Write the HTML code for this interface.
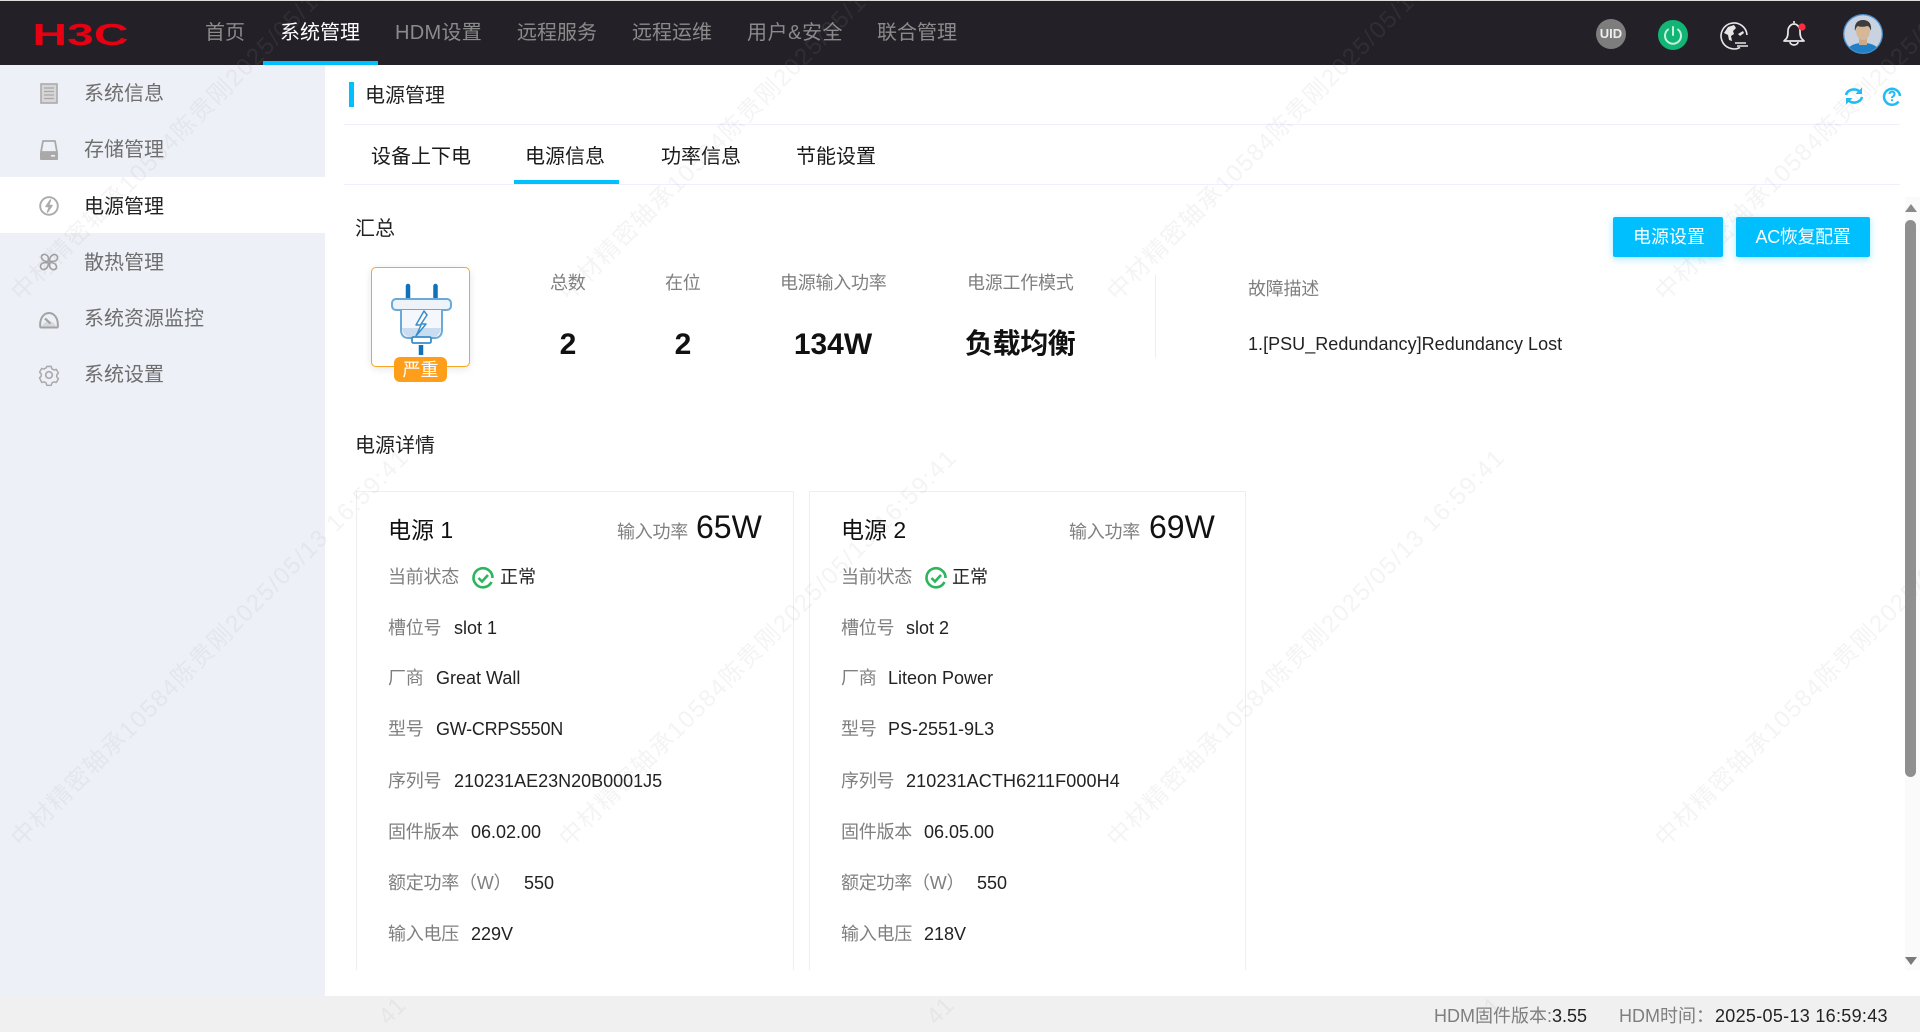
<!DOCTYPE html>
<html lang="zh-CN">
<head>
<meta charset="utf-8">
<title>电源管理</title>
<style>
*{box-sizing:border-box}
html,body{margin:0;padding:0;width:1920px;height:1032px;overflow:hidden;background:#fff;font-family:"Liberation Sans","Noto Sans CJK SC",sans-serif;color:#222}
#page{position:absolute;left:0;top:0;width:1920px;height:1032px;overflow:hidden}
.a{position:absolute;white-space:nowrap}
.t{position:absolute;white-space:nowrap;line-height:30px;height:30px}
.n{font-size:20px;color:#8b8b8b;top:18px}
.s{font-size:20px;color:#6e6e6e;left:84px}
.tab{font-size:20px;color:#1a1a1a;top:142px}
.l{font-size:18px;color:#7f7f7f;letter-spacing:-.25px}
.v{font-size:18px;color:#222}
.b{font-weight:bold;color:#111}
.line{position:absolute;left:344px;width:1556px;height:1px;background:#eeeeff}
.btn{position:absolute;top:217px;height:40px;background:#00bfff;border-radius:2px;color:#fff;font-size:18px;line-height:41px;text-align:center;box-shadow:0 2px 8px rgba(0,191,255,.35)}
.card{position:absolute;top:491px;height:490px;border:1px solid #eee;background:#fff}
.ic{position:absolute;overflow:visible}
</style>
</head>
<body>
<div id="page">
<div class="a" style="left:0;top:0;width:1920px;height:1px;background:#ddd"></div>
<div class="a" style="left:0;top:1px;width:1920px;height:64px;background:#232127"></div>

<svg class="ic" style="left:34px;top:19px" width="94" height="28" viewBox="0 0 94 28"><text x="-1.500" y="26" font-family="Liberation Sans" font-weight="bold" font-size="31" fill="#e60012" textLength="96" lengthAdjust="spacingAndGlyphs">H3C</text></svg>

<div class="t n" style="left:205px">首页</div>
<div class="t n" style="left:280px;color:#fff">系统管理</div>
<div class="a" style="left:263px;top:61px;width:115px;height:4px;background:#00bfff"></div>
<div class="t n" style="left:395px;letter-spacing:.3px">HDM设置</div>
<div class="t n" style="left:517px">远程服务</div>
<div class="t n" style="left:632px">远程运维</div>
<div class="t n" style="left:747px;letter-spacing:.55px">用户&amp;安全</div>
<div class="t n" style="left:877px">联合管理</div>

<div class="a" style="left:1596px;top:19px;width:30px;height:30px;border-radius:50%;background:#7d7d7d;color:#eee;font-size:13px;font-weight:bold;line-height:30px;text-align:center">UID</div>
<svg class="ic" style="left:1658px;top:20px" width="30" height="30" viewBox="0 0 30 30"><circle cx="15" cy="15" r="15" fill="#12b573"/><path d="M10 9.500a8 8 0 1 0 10 0" fill="none" stroke="#c9f0df" stroke-width="2" stroke-linecap="round"/><path d="M15 7v8" stroke="#c9f0df" stroke-width="2" stroke-linecap="round"/></svg>
<svg class="ic" style="left:1719px;top:21px" width="30" height="30" viewBox="0 0 30 30"><path d="M21 26.500A13 13 0 1 1 28 14" fill="none" stroke="#e6e6e6" stroke-width="1.600"/><path d="M9 6l6-2 2 3-3 3 1 3-3 2 1 5-3-1-1-5-4-2z" fill="#e6e6e6"/><path d="M19 13l5-3 1 2-4 3z" fill="#e6e6e6"/><path d="M16 22h11M18 25h11" stroke="#e6e6e6" stroke-width="1.500"/></svg>
<svg class="ic" style="left:1781px;top:19px" width="28" height="28" viewBox="0 0 28 28"><path d="M13 2v2M5 20c2-2 2-5 2-8 0-4 3-7 6-7s6 3 6 7c0 3 0 6 2 8l2 2H3z" fill="none" stroke="#e8e8e8" stroke-width="1.700" stroke-linejoin="round"/><path d="M9 23a4 3 0 0 0 8 0" fill="none" stroke="#e8e8e8" stroke-width="1.700"/><circle cx="21" cy="8" r="3.600" fill="#ff2d3d"/></svg>
<svg class="ic" style="left:1843px;top:14px" width="40" height="40" viewBox="0 0 40 40"><defs><clipPath id="av"><circle cx="20" cy="20" r="19"/></clipPath></defs><circle cx="20" cy="20" r="20" fill="#4a90cf"/><circle cx="20" cy="20" r="18.700" fill="#c8d2e0"/><g clip-path="url(#av)"><path d="M3 40c1-8 8-11 17-11s16 3 17 11z" fill="#1f80c8"/><rect x="16" y="22" width="8" height="9" fill="#c9ab8c"/><ellipse cx="20" cy="17" rx="7" ry="9" fill="#d6b899"/><path d="M12 17c-1-8 3-11 8-11s9 3 8 11c-1-3-2-5-4-5-3 1-7 1-9 0-2 1-2 3-3 5z" fill="#3d3d3d"/></g></svg>

<div class="a" style="left:0;top:65px;width:325px;height:931px;background:#eef0f7"></div>
<div class="a" style="left:0;top:177px;width:325px;height:56px;background:#fff"></div>

<svg class="ic" style="left:40px;top:83px" width="18" height="21" viewBox="0 0 18 21"><rect x="1" y="1" width="16" height="19" fill="#d6d6d8" stroke="#ababab" stroke-width="1.600"/><path d="M4 5h10M4 8.500h10M4 12h10M4 15.500h10" stroke="#a8a8a8" stroke-width="1.300"/></svg>
<svg class="ic" style="left:39px;top:139px" width="20" height="22" viewBox="0 0 20 22"><path d="M4 2h12l2 11H2z" fill="none" stroke="#a9a9a9" stroke-width="1.800" stroke-linejoin="round"/><rect x="1" y="13" width="18" height="8" rx="1" fill="#a9a9a9"/><rect x="12" y="16" width="4" height="1.600" fill="#eef0f7"/></svg>
<svg class="ic" style="left:39px;top:196px" width="20" height="20" viewBox="0 0 20 20"><circle cx="10" cy="10" r="8.800" fill="none" stroke="#ababab" stroke-width="1.900"/><path d="M11.500 4L7 10.500h3.600L8.500 16l4.500-6.500H9.400z" fill="none" stroke="#ababab" stroke-width="1.500" stroke-linejoin="round"/></svg>
<svg class="ic" style="left:39px;top:252px" width="20" height="20" viewBox="0 0 20 20"><g fill="none" stroke="#a0a0a0" stroke-width="1.600"><path d="M9 9.500C5.500 9.500 3 8 2.500 5.500S5 1.500 7.500 3 9.500 7 9 9.500z"/><path d="M10.500 9c0-3.500 2-6 4.500-6.500s4.500 2.500 3 5-5 2-7.500 1.500z"/><path d="M11 10.500c3.500 0 6 1.500 6.500 4s-2.500 4-5 2.500-2-4-1.500-6.500z"/><path d="M9.500 11c0 3.500-2 6-4.500 6.500s-4.500-2.500-3-5 5-2 7.500-1.500z"/></g></svg>
<svg class="ic" style="left:39px;top:311px" width="20" height="18" viewBox="0 0 20 18"><path d="M1.200 15.500C.5 7 5 2 10 2s9.500 5 8.800 13.500q-.1 1-1 1H2.200q-.9 0-1-1z" fill="none" stroke="#a3a3a3" stroke-width="2"/><path d="M6 7.500l5.500 5" stroke="#a3a3a3" stroke-width="2.200"/><path d="M3 16.500a7 6 0 0 1 14 0" fill="#a3a3a3" opacity=".3"/></svg>
<svg class="ic" style="left:38px;top:364px" width="22" height="22" viewBox="0 0 22 22"><path d="M8.500 1.500h5l.7 2.600 2.300 1.300 2.600-.7 2.400 4.200-1.900 1.900v2.400l1.900 1.900-2.400 4.200-2.600-.7-2.300 1.300-.7 2.600h-5l-.7-2.600-2.300-1.300-2.600.7L.5 14.100l1.900-1.900V9.800L.5 7.900l2.400-4.200 2.600.7 2.300-1.300z" transform="translate(1.100 1.100) scale(.9)" fill="none" stroke="#ababab" stroke-width="1.700" stroke-linejoin="round"/><circle cx="11" cy="11" r="3.300" fill="none" stroke="#ababab" stroke-width="1.700"/></svg>

<div class="t s" style="top:79px">系统信息</div>
<div class="t s" style="top:135px">存储管理</div>
<div class="t s" style="top:192px;color:#222">电源管理</div>
<div class="t s" style="top:248px">散热管理</div>
<div class="t s" style="top:304px">系统资源监控</div>
<div class="t s" style="top:360px">系统设置</div>

<div class="a" style="left:349px;top:82px;width:5px;height:25px;background:#00bfff"></div>
<div class="t" style="left:365px;top:81px;font-size:20px;color:#222">电源管理</div>
<svg class="ic" style="left:1844px;top:86px" width="20" height="20" viewBox="0 0 20 20"><g fill="none" stroke="#1fbcf5" stroke-width="2.600"><path d="M2 9a8 7 0 0 1 14-3"/><path d="M18 11a8 7 0 0 1-14 3"/></g><path d="M18 1.500v6.500h-6.500z" fill="#1fbcf5"/><path d="M2 18.500V12h6.500z" fill="#1fbcf5"/></svg>
<svg class="ic" style="left:1883px;top:87px" width="18" height="18" viewBox="0 0 18 18"><path d="M15.500 14.500A8 8 0 1 1 17 9" fill="none" stroke="#1fbcf5" stroke-width="2.500"/><path d="M6.500 7a2.500 2.500 0 1 1 3.800 2.200c-.9.500-1.300 1-1.300 1.800" fill="none" stroke="#1fbcf5" stroke-width="2"/><circle cx="9" cy="13.200" r="1.100" fill="#1fbcf5"/></svg>
<div class="line" style="top:124px"></div>
<div class="t tab" style="left:371px">设备上下电</div>
<div class="t tab" style="left:525px">电源信息</div>
<div class="t tab" style="left:661px">功率信息</div>
<div class="t tab" style="left:796px">节能设置</div>
<div class="line" style="top:184px"></div>
<div class="a" style="left:514px;top:180px;width:105px;height:4px;background:#00bfff"></div>

<div class="t" style="left:355px;top:214px;font-size:20px;color:#222">汇总</div>

<div class="a" style="left:371px;top:267px;width:99px;height:100px;border:1px solid #f5a623;border-radius:5px;box-shadow:0 2px 8px rgba(0,0,0,.1);background:#fff"></div>
<svg class="ic" style="left:371px;top:267px" width="99" height="100" viewBox="371 267 99 100"><g fill="none" stroke-linecap="round"><path d="M408 286v14M435.500 286v14" stroke="#0f72ba" stroke-width="4.500"/><path d="M421 345v10" stroke="#0f72ba" stroke-width="4.500" stroke-linecap="butt"/></g><rect x="392" y="299" width="59" height="11" rx="4" fill="#eef3fa" stroke="#6aa9d8" stroke-width="2"/><path d="M401 310v20c0 5 3 8 7 8h27c4 0 7-3 7-8v-20" fill="#f4f7fc" stroke="#6aa9d8" stroke-width="2"/><path d="M402 328c1 6 4 9 8 9h23c4 0 7-3 8-9z" fill="#c9dcf0"/><rect x="412" y="337" width="19" height="6" rx="1.500" fill="#fff" stroke="#3a8dc9" stroke-width="1.800"/><path d="M424 311l-8 14h5l-3 7-2 4 10-12h-5l6-9z" fill="#fff" stroke="#3a8dc9" stroke-width="1.500" stroke-linejoin="round"/></svg>
<div class="a" style="left:394px;top:357px;width:53px;height:25px;background:#ff9e1b;border-radius:6px;color:#fff;font-size:18px;line-height:26px;text-align:center">严重</div>

<div class="t l" style="left:550px;top:268px">总数</div>
<div class="t l" style="left:665px;top:268px">在位</div>
<div class="t l" style="left:780px;top:268px">电源输入功率</div>
<div class="t l" style="left:967px;top:268px">电源工作模式</div>
<div class="t b" style="left:548px;width:40px;text-align:center;top:329px;font-size:30px;line-height:32px">2</div>
<div class="t b" style="left:663px;width:40px;text-align:center;top:329px;font-size:30px;line-height:32px">2</div>
<div class="t b" style="left:773px;width:120px;text-align:center;top:329px;font-size:30px;line-height:32px">134W</div>
<div class="t b" style="left:965px;top:327px;font-size:28px;line-height:34px;height:34px;letter-spacing:-.4px">负载均衡</div>
<div class="a" style="left:1155px;top:275px;width:1px;height:83px;background:#eee"></div>
<div class="t l" style="left:1248px;top:274px">故障描述</div>
<div class="t v" style="left:1248px;top:329px;letter-spacing:.03px">1.[PSU_Redundancy]Redundancy Lost</div>

<div class="btn" style="left:1613px;width:110px;padding-left:2px">电源设置</div>
<div class="btn" style="left:1736px;width:134px;letter-spacing:-.35px">AC恢复配置</div>

<div class="t" style="left:355px;top:431px;font-size:20px;color:#222">电源详情</div>

<div class="card" style="left:356px;width:438px"></div>
<div class="card" style="left:809px;width:437px"></div>

<!-- Card 1 -->
<div class="t" style="left:388px;top:515px;font-size:23px;color:#111">电源 1</div>
<div class="t l" style="left:617px;top:517px">输入功率</div>
<div class="t" style="left:696px;top:510px;font-size:32px;line-height:34px;height:34px;color:#111">65W</div>
<div class="t l" style="left:388px;top:562px">当前状态</div>
<svg class="ic" style="left:472px;top:567px" width="22" height="22" viewBox="0 0 22 22"><path d="M19.500 15A9.500 9.500 0 1 1 20.500 11" fill="none" stroke="#2db55d" stroke-width="2.600"/><path d="M6.500 11l3.500 3.500 6-6.500" fill="none" stroke="#2db55d" stroke-width="2.600"/></svg>
<div class="t v" style="left:500px;top:562px">正常</div>
<div class="t l" style="left:388px;top:613px">槽位号</div><div class="t v" style="left:454px;top:613px">slot 1</div>
<div class="t l" style="left:388px;top:663px">厂商</div><div class="t v" style="left:436px;top:663px">Great Wall</div>
<div class="t l" style="left:388px;top:714px">型号</div><div class="t v" style="left:436px;top:714px;letter-spacing:-.25px">GW-CRPS550N</div>
<div class="t l" style="left:388px;top:766px">序列号</div><div class="t v" style="left:454px;top:766px">210231AE23N20B0001J5</div>
<div class="t l" style="left:388px;top:817px">固件版本</div><div class="t v" style="left:471px;top:817px">06.02.00</div>
<div class="t l" style="left:388px;top:868px">额定功率（W）</div><div class="t v" style="left:524px;top:868px">550</div>
<div class="t l" style="left:388px;top:919px">输入电压</div><div class="t v" style="left:471px;top:919px">229V</div>

<!-- Card 2 -->
<div class="t" style="left:841px;top:515px;font-size:23px;color:#111">电源 2</div>
<div class="t l" style="left:1069px;top:517px">输入功率</div>
<div class="t" style="left:1149px;top:510px;font-size:32px;line-height:34px;height:34px;color:#111">69W</div>
<div class="t l" style="left:841px;top:562px">当前状态</div>
<svg class="ic" style="left:925px;top:567px" width="22" height="22" viewBox="0 0 22 22"><path d="M19.500 15A9.500 9.500 0 1 1 20.500 11" fill="none" stroke="#2db55d" stroke-width="2.600"/><path d="M6.500 11l3.500 3.500 6-6.500" fill="none" stroke="#2db55d" stroke-width="2.600"/></svg>
<div class="t v" style="left:952px;top:562px">正常</div>
<div class="t l" style="left:841px;top:613px">槽位号</div><div class="t v" style="left:906px;top:613px">slot 2</div>
<div class="t l" style="left:841px;top:663px">厂商</div><div class="t v" style="left:888px;top:663px">Liteon Power</div>
<div class="t l" style="left:841px;top:714px">型号</div><div class="t v" style="left:888px;top:714px">PS-2551-9L3</div>
<div class="t l" style="left:841px;top:766px">序列号</div><div class="t v" style="left:906px;top:766px;letter-spacing:.1px">210231ACTH6211F000H4</div>
<div class="t l" style="left:841px;top:817px">固件版本</div><div class="t v" style="left:924px;top:817px">06.05.00</div>
<div class="t l" style="left:841px;top:868px">额定功率（W）</div><div class="t v" style="left:977px;top:868px">550</div>
<div class="t l" style="left:841px;top:919px">输入电压</div><div class="t v" style="left:924px;top:919px">218V</div>

<!-- Clip bottom of the scrolling area -->
<div class="a" style="left:325px;top:970px;width:1595px;height:26px;background:#fff"></div>

<!-- Scrollbar -->
<div class="a" style="left:1905px;top:197px;width:15px;height:773px;background:#fafafa"></div>
<svg class="ic" style="left:1904px;top:203px" width="14" height="10" viewBox="0 0 14 10"><path d="M7 1l6 8H1z" fill="#8a8a8a"/></svg>
<div class="a" style="left:1905px;top:220px;width:11px;height:557px;background:#8f8f8f;border-radius:6px"></div>
<svg class="ic" style="left:1904px;top:956px" width="14" height="10" viewBox="0 0 14 10"><path d="M7 9L1 1h12z" fill="#7a7a7a"/></svg>

<!-- Footer -->
<div class="a" style="left:0;top:996px;width:1920px;height:36px;background:#f0f0f0"></div>
<div class="t l" style="left:1434px;top:1001px;letter-spacing:0">HDM固件版本:<span style="color:#222">3.55</span></div>
<div class="t l" style="left:1619px;top:1001px;letter-spacing:0">HDM时间：</div>
<div class="t v" style="left:1715px;top:1001px;letter-spacing:.3px">2025-05-13 16:59:43</div>

<!-- Watermark -->
<div class="a" style="left:0;top:0;width:1920px;height:1032px;overflow:hidden;pointer-events:none">
<svg style="display:block" width="1920" height="1032" viewBox="0 0 1920 1032">
<g font-family="Liberation Sans,Noto Sans CJK SC,sans-serif" font-size="24" fill="#9a9a9a" fill-opacity=".11">
<text transform="translate(21 302) rotate(-45)" textLength="549" lengthAdjust="spacing">中材精密轴承10584陈贵刚2025/05/13 16:59:41</text>
<text transform="translate(569 302) rotate(-45)" textLength="549" lengthAdjust="spacing">中材精密轴承10584陈贵刚2025/05/13 16:59:41</text>
<text transform="translate(1117 302) rotate(-45)" textLength="549" lengthAdjust="spacing">中材精密轴承10584陈贵刚2025/05/13 16:59:41</text>
<text transform="translate(1665 302) rotate(-45)" textLength="549" lengthAdjust="spacing">中材精密轴承10584陈贵刚2025/05/13 16:59:41</text>
<text transform="translate(21 848) rotate(-45)" textLength="549" lengthAdjust="spacing">中材精密轴承10584陈贵刚2025/05/13 16:59:41</text>
<text transform="translate(569 848) rotate(-45)" textLength="549" lengthAdjust="spacing">中材精密轴承10584陈贵刚2025/05/13 16:59:41</text>
<text transform="translate(1117 848) rotate(-45)" textLength="549" lengthAdjust="spacing">中材精密轴承10584陈贵刚2025/05/13 16:59:41</text>
<text transform="translate(1665 848) rotate(-45)" textLength="549" lengthAdjust="spacing">中材精密轴承10584陈贵刚2025/05/13 16:59:41</text>
<text transform="translate(388 1026) rotate(-45)">41</text>
<text transform="translate(936 1026) rotate(-45)">41</text>
<text transform="translate(1484 1026) rotate(-45)">41</text>
</g>
</svg>
</div>
</div>
</body>
</html>
